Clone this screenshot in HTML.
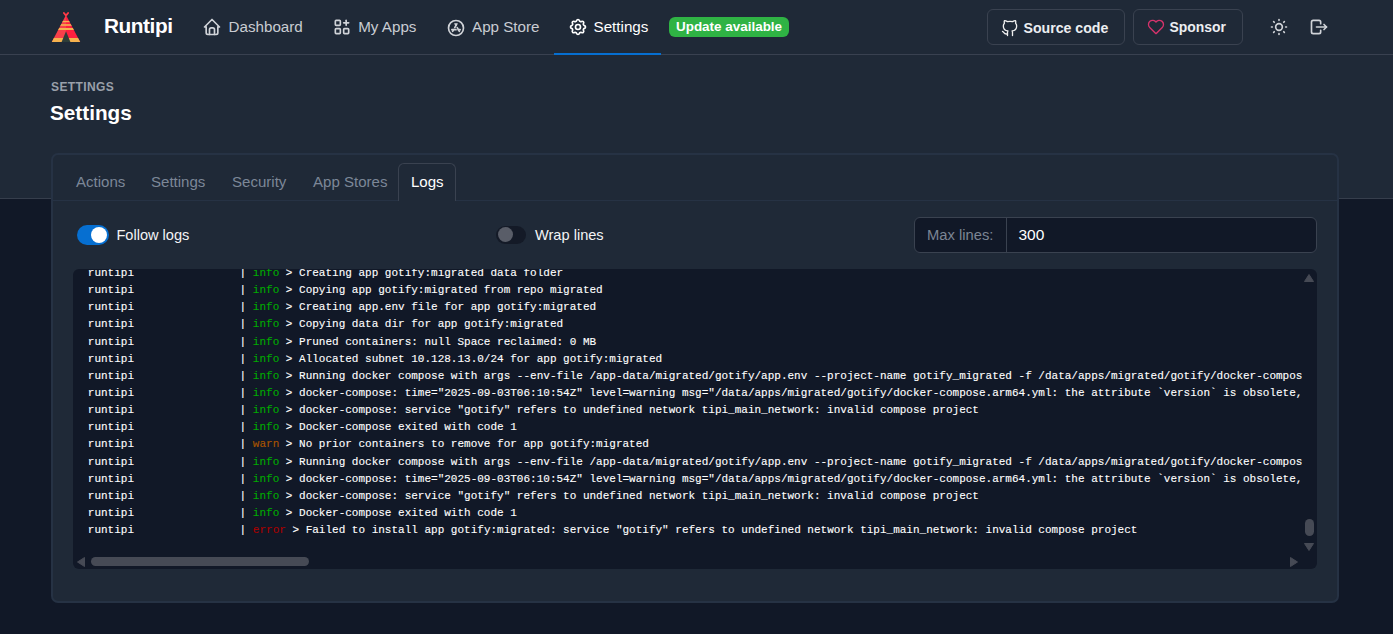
<!DOCTYPE html>
<html><head><meta charset="utf-8">
<style>
*{box-sizing:border-box;margin:0;padding:0}
html,body{width:1393px;height:634px;overflow:hidden}
body{background:#111827;font-family:"Liberation Sans",sans-serif;color:#fff;position:relative}
.abs{position:absolute}
.topbg{left:0;top:0;width:1393px;height:199px;background:#1f2937;border-bottom:1px solid #363e4c}
.hdrline{left:0;top:54px;width:1393px;height:1px;background:#394150}
.t{position:absolute;white-space:nowrap;line-height:1}
svg.ic{position:absolute;fill:none;stroke:currentColor;stroke-width:2;stroke-linecap:round;stroke-linejoin:round}
.nav{font-size:15.2px;color:#c9ccd2}
.btn{position:absolute;border:1px solid #3a4250;border-radius:6px;height:36px;top:9px}
.card{left:51px;top:153px;width:1288px;height:450px;background:#1f2937;border:2px solid #263244;border-radius:7px}
.tabline{left:53px;top:200px;width:1284px;height:1px;background:#263244}
.tab{font-size:15.05px;color:#7c8797}
.activetab{left:398px;top:163px;width:58px;height:38px;border:1px solid #3a4250;border-bottom:none;border-radius:6px 6px 0 0;background:#1f2937}
.lbl{font-size:14.6px;color:#f3f4f6}
.logbox{left:73px;top:269px;width:1244px;height:300px;background:#111827;border-radius:6px;overflow:hidden}
.log{position:absolute;left:14.8px;font-family:"Liberation Mono",monospace;font-size:11px;line-height:17.142857px;white-space:pre;color:#fff;width:1214.2px;overflow:hidden;-webkit-text-stroke:0.12px currentColor}
.g{color:#0a0}.y{color:#a50}.r{color:#a00}
.sb{position:absolute;background:#464a55}
</style></head>
<body>
<div class="abs topbg"></div>
<div class="abs hdrline"></div>

<!-- logo -->
<svg class="abs" style="left:48px;top:8px" width="36" height="38" viewBox="0 0 36 38">
  <defs><clipPath id="tri"><polygon points="18,7 32.2,34 3.8,34"/></clipPath></defs>
  <path d="M15.9 5 L18 7.6 L20.1 5" stroke="#ff3b47" stroke-width="1.9" fill="none" stroke-linecap="round"/>
  <g clip-path="url(#tri)">
  <rect x="18" y="0" width="18" height="38" fill="#ff1f3f"/>
  <rect x="0" y="0" width="18" height="38" fill="#f7404a"/>
  <rect x="0" y="12.9" width="36" height="1.3" fill="#f6b24e"/>
  <rect x="0" y="16.2" width="36" height="1.6" fill="#f6b24e"/>
  <rect x="0" y="20" width="36" height="2" fill="#f6b24e"/>
  <rect x="0" y="30" width="36" height="4" fill="#f6b24e"/>
  <polygon points="18,23.2 22.4,34 13.6,34" fill="#2e3d38"/>
  </g>
</svg>
<div class="t" style="left:104px;top:16.4px;font-size:20.8px;font-weight:bold;color:#fff;letter-spacing:-0.45px">Runtipi</div>

<!-- nav -->
<svg class="ic" style="left:202px;top:17px;color:#d0d3d8" width="20" height="20" viewBox="0 0 24 24"><path d="M5 12l-2 0l9 -9l9 9l-2 0"/><path d="M5 12v7a2 2 0 0 0 2 2h10a2 2 0 0 0 2 -2v-7"/><path d="M9 21v-6a2 2 0 0 1 2 -2h2a2 2 0 0 1 2 2v6"/></svg>
<div class="t nav" style="left:228.5px;top:19px">Dashboard</div>
<svg class="ic" style="left:332px;top:17px;color:#d0d3d8" width="20" height="20" viewBox="0 0 24 24"><path d="M4 4m0 1a1 1 0 0 1 1 -1h4a1 1 0 0 1 1 1v4a1 1 0 0 1 -1 1h-4a1 1 0 0 1 -1 -1z"/><path d="M4 14m0 1a1 1 0 0 1 1 -1h4a1 1 0 0 1 1 1v4a1 1 0 0 1 -1 1h-4a1 1 0 0 1 -1 -1z"/><path d="M14 14m0 1a1 1 0 0 1 1 -1h4a1 1 0 0 1 1 1v4a1 1 0 0 1 -1 1h-4a1 1 0 0 1 -1 -1z"/><path d="M14 7l6 0"/><path d="M17 4l0 6"/></svg>
<div class="t nav" style="left:358.2px;top:19px">My Apps</div>
<svg class="ic" style="left:446px;top:18px;color:#d0d3d8" width="20" height="20" viewBox="0 0 24 24"><path d="M12 12m-9 0a9 9 0 1 0 18 0a9 9 0 1 0 -18 0"/><path d="M8 16l1.106 -1.99m1.4 -2.522l2.494 -4.488"/><path d="M7 14h5m2.9 0h2.1"/><path d="M16 16l-2.51 -4.518m-1.487 -2.677l-1 -1.805"/></svg>
<div class="t nav" style="left:472px;top:19px">App Store</div>
<svg class="ic" style="left:568px;top:17px;color:#fff" width="20" height="20" viewBox="0 0 24 24"><path d="M10.325 4.317c.426 -1.756 2.924 -1.756 3.35 0a1.724 1.724 0 0 0 2.573 1.066c1.543 -.94 3.31 .826 2.37 2.37a1.724 1.724 0 0 0 1.065 2.572c1.756 .426 1.756 2.924 0 3.35a1.724 1.724 0 0 0 -1.066 2.573c.94 1.543 -.826 3.31 -2.37 2.37a1.724 1.724 0 0 0 -2.572 1.065c-.426 1.756 -2.924 1.756 -3.35 0a1.724 1.724 0 0 0 -2.573 -1.066c-1.543 .94 -3.31 -.826 -2.37 -2.37a1.724 1.724 0 0 0 -1.065 -2.572c-1.756 -.426 -1.756 -2.924 0 -3.35a1.724 1.724 0 0 0 1.066 -2.573c-.94 -1.543 .826 -3.31 2.37 -2.37c1 .608 2.296 .07 2.572 -1.065z"/><path d="M9 12a3 3 0 1 0 6 0a3 3 0 0 0 -6 0"/></svg>
<div class="t nav" style="left:593.5px;top:19px;color:#fff">Settings</div>
<div class="abs" style="left:554px;top:53px;width:107px;height:2px;background:#066fd1"></div>
<div class="abs" style="left:669px;top:17px;width:120px;height:20px;border-radius:6px;background:#2fb344"></div>
<div class="t" style="left:676px;top:19.5px;font-size:13.44px;font-weight:bold;color:#fff">Update available</div>

<!-- right buttons -->
<div class="btn" style="left:987px;width:138px"></div>
<svg class="ic" style="left:1000px;top:17.5px;color:#f0f0f0;stroke-width:1.6" width="20" height="20" viewBox="0 0 24 24"><path d="M9 19c-4.3 1.4 -4.3 -2.5 -6 -3m12 5v-3.5c0 -1 .1 -1.4 -.5 -2c2.8 -.3 5.5 -1.4 5.5 -6a4.6 4.6 0 0 0 -1.3 -3.2a4.2 4.2 0 0 0 -.1 -3.2s-1.1 -.3 -3.5 1.3a12.3 12.3 0 0 0 -6.2 0c-2.4 -1.6 -3.5 -1.3 -3.5 -1.3a4.2 4.2 0 0 0 -.1 3.2a4.6 4.6 0 0 0 -1.3 3.2c0 4.6 2.7 5.7 5.5 6c-.6 .6 -.6 1.2 -.5 2v3.5"/></svg>
<div class="t" style="left:1023.5px;top:20.6px;font-size:14.15px;font-weight:bold;color:#eceef1">Source code</div>
<div class="btn" style="left:1133px;width:110px"></div>
<svg class="ic" style="left:1146px;top:16.8px;color:#d6336c;stroke-width:1.6" width="20" height="20" viewBox="0 0 24 24"><path d="M19.5 12.572l-7.5 7.428l-7.5 -7.428a5 5 0 1 1 7.5 -6.566a5 5 0 1 1 7.5 6.572"/></svg>
<div class="t" style="left:1169.5px;top:20.8px;font-size:13.93px;font-weight:bold;color:#eceef1">Sponsor</div>
<svg class="ic" style="left:1269px;top:17px;color:#d0d3d8" width="20" height="20" viewBox="0 0 24 24"><path d="M12 12m-4 0a4 4 0 1 0 8 0a4 4 0 1 0 -8 0"/><path d="M3 12h1m8 -9v1m8 8h1m-9 8v1m-6.4 -15.4l.7 .7m12.1 -.7l-.7 .7m0 11.4l.7 .7m-12.1 -.7l-.7 .7"/></svg>
<svg class="ic" style="left:1309px;top:17px;color:#d0d3d8" width="20" height="20" viewBox="0 0 24 24"><path d="M14 8v-2a2 2 0 0 0 -2 -2h-7a2 2 0 0 0 -2 2v12a2 2 0 0 0 2 2h7a2 2 0 0 0 2 -2v-2"/><path d="M9 12h12l-3 -3"/><path d="M18 15l3 -3"/></svg>

<!-- page header -->
<div class="t" style="left:51px;top:81px;font-size:12px;font-weight:bold;color:#9aa0aa;letter-spacing:0.4px">SETTINGS</div>
<div class="t" style="left:50px;top:102.7px;font-size:20.74px;font-weight:bold;color:#fff">Settings</div>

<!-- card -->
<div class="abs card"></div>
<div class="abs tabline"></div>
<div class="abs activetab"></div>
<div class="t tab" style="left:76px;top:173.7px">Actions</div>
<div class="t tab" style="left:151px;top:173.7px">Settings</div>
<div class="t tab" style="left:232px;top:173.7px">Security</div>
<div class="t tab" style="left:313px;top:173.7px">App Stores</div>
<div class="t tab" style="left:411px;top:173.7px;color:#fff">Logs</div>

<!-- toggles -->
<div class="abs" style="left:77px;top:225px;width:32px;height:20px;border-radius:10px;background:#066fd1"></div>
<div class="abs" style="left:91px;top:227px;width:16px;height:16px;border-radius:8px;background:#fff"></div>
<div class="t lbl" style="left:116.4px;top:227.8px">Follow logs</div>
<div class="abs" style="left:496px;top:226px;width:30px;height:18px;border-radius:9px;background:#141a27"></div>
<div class="abs" style="left:498px;top:227px;width:15px;height:15px;border-radius:8px;background:#595d68"></div>
<div class="t lbl" style="left:535px;top:228px">Wrap lines</div>

<!-- max lines -->
<div class="abs" style="left:914px;top:217px;width:403px;height:36px;border:1px solid #3a4250;border-radius:6px;background:#111827"></div>
<div class="abs" style="left:1006px;top:218px;width:1px;height:34px;background:#3a4250"></div>
<div class="t" style="left:927px;top:227.8px;font-size:14.75px;color:#7c8594">Max lines:</div>
<div class="t" style="left:1018.5px;top:227.2px;font-size:15.5px;color:#fff">300</div>

<!-- log box -->
<div class="abs logbox">
<div class="log" style="top:-4px">runtipi                | <span class="g">info</span> &gt; Creating app gotify:migrated data folder
runtipi                | <span class="g">info</span> &gt; Copying app gotify:migrated from repo migrated
runtipi                | <span class="g">info</span> &gt; Creating app.env file for app gotify:migrated
runtipi                | <span class="g">info</span> &gt; Copying data dir for app gotify:migrated
runtipi                | <span class="g">info</span> &gt; Pruned containers: null Space reclaimed: 0 MB
runtipi                | <span class="g">info</span> &gt; Allocated subnet 10.128.13.0/24 for app gotify:migrated
runtipi                | <span class="g">info</span> &gt; Running docker compose with args --env-file /app-data/migrated/gotify/app.env --project-name gotify_migrated -f /data/apps/migrated/gotify/docker-compose.arm64.yml up -d
runtipi                | <span class="g">info</span> &gt; docker-compose: time="2025-09-03T06:10:54Z" level=warning msg="/data/apps/migrated/gotify/docker-compose.arm64.yml: the attribute `version` is obsolete, it will be ignored"
runtipi                | <span class="g">info</span> &gt; docker-compose: service "gotify" refers to undefined network tipi_main_network: invalid compose project
runtipi                | <span class="g">info</span> &gt; Docker-compose exited with code 1
runtipi                | <span class="y">warn</span> &gt; No prior containers to remove for app gotify:migrated
runtipi                | <span class="g">info</span> &gt; Running docker compose with args --env-file /app-data/migrated/gotify/app.env --project-name gotify_migrated -f /data/apps/migrated/gotify/docker-compose.arm64.yml up -d
runtipi                | <span class="g">info</span> &gt; docker-compose: time="2025-09-03T06:10:54Z" level=warning msg="/data/apps/migrated/gotify/docker-compose.arm64.yml: the attribute `version` is obsolete, it will be ignored"
runtipi                | <span class="g">info</span> &gt; docker-compose: service "gotify" refers to undefined network tipi_main_network: invalid compose project
runtipi                | <span class="g">info</span> &gt; Docker-compose exited with code 1
runtipi                | <span class="r">error</span> &gt; Failed to install app gotify:migrated: service "gotify" refers to undefined network tipi_main_network: invalid compose project
</div>
<!-- scrollbars -->
<div class="sb" style="left:1232px;top:250px;width:9px;height:17px;border-radius:5px"></div>
<div class="sb" style="left:18px;top:288px;width:218px;height:9px;border-radius:5px"></div>
<svg class="abs" style="left:1231px;top:5px" width="10" height="8" viewBox="0 0 10 8"><polygon points="5,0.5 9.5,7.5 0.5,7.5" fill="#464a55" stroke="#464a55" stroke-width="1" stroke-linejoin="round"/></svg>
<svg class="abs" style="left:1231px;top:274px" width="10" height="8" viewBox="0 0 10 8"><polygon points="0.5,0.5 9.5,0.5 5,7.5" fill="#464a55" stroke="#464a55" stroke-width="1" stroke-linejoin="round"/></svg>
<svg class="abs" style="left:4px;top:288px" width="8" height="10" viewBox="0 0 8 10"><polygon points="7.5,0.5 7.5,9.5 0.5,5" fill="#464a55" stroke="#464a55" stroke-width="1" stroke-linejoin="round"/></svg>
<svg class="abs" style="left:1217px;top:288px" width="8" height="10" viewBox="0 0 8 10"><polygon points="0.5,0.5 0.5,9.5 7.5,5" fill="#464a55" stroke="#464a55" stroke-width="1" stroke-linejoin="round"/></svg>
</div>
</body></html>
